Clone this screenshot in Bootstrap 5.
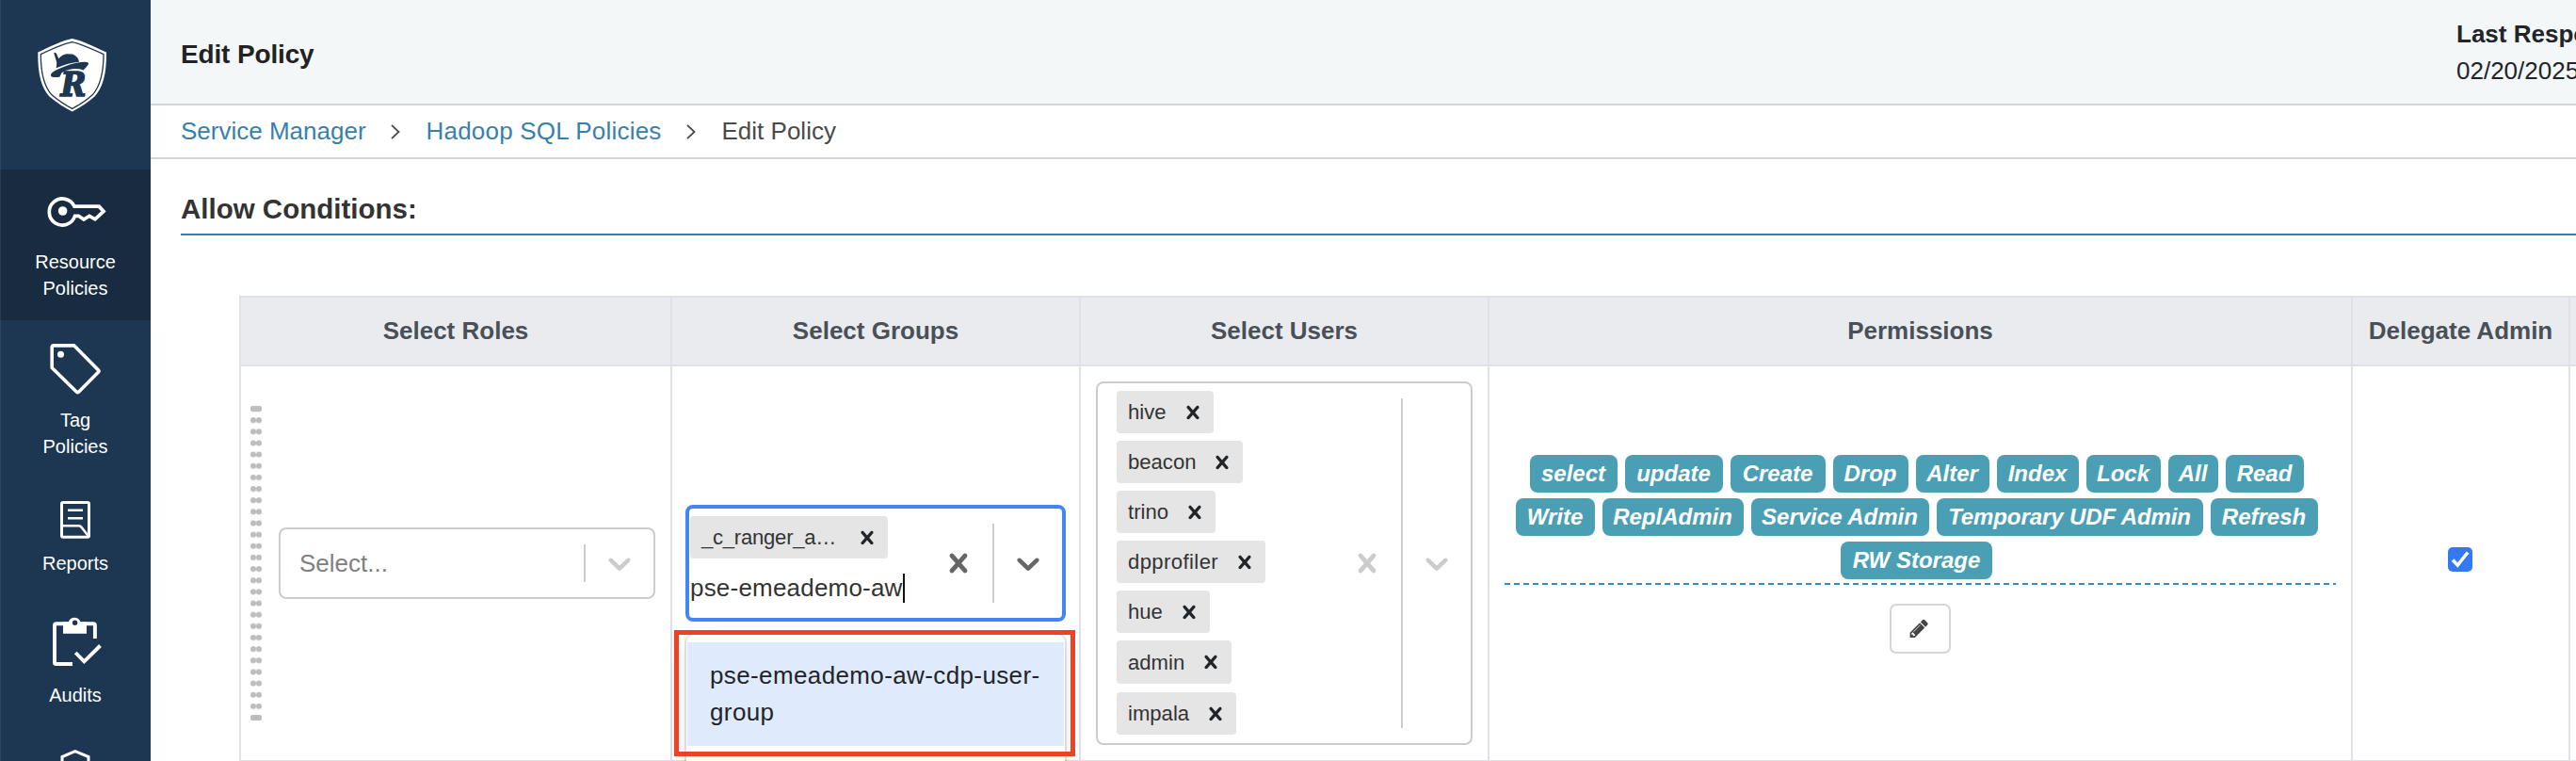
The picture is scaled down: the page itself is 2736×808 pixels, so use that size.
<!DOCTYPE html>
<html lang="en">
<head>
<meta charset="utf-8">
<title>Edit Policy</title>
<link rel="stylesheet" href="https://cdn.jsdelivr.net/npm/bootstrap@5.3.0/dist/css/bootstrap.min.css">
<script src="https://cdn.jsdelivr.net/npm/bootstrap@5.3.0/dist/js/bootstrap.bundle.min.js"></script>
<style>
  html, body { height: 808px; overflow: hidden; }
  body { font-family: "Liberation Sans", Arial, sans-serif; font-size: 26px; line-height: 39px; color: #212529; background: #fff; }
  svg { display: block; flex: none; }
  main { min-width: 0; height: 808px; }
  .side { width: 160px; height: 808px; background: #1d3651; box-shadow: inset 1px 0 #2e4661; color: #fff; font-size: 20px; line-height: 28px; overflow: hidden; }
  .side-item { color: #fff; text-align: center; text-decoration: none; }
  .side-item.current { background: #182b40; height: 160px; box-shadow: inset 1px 0 #2a3c50; }
  .topbar { height: 112px; background: #f4f7f8; border-bottom: 2px solid #d3d6d7; padding: 13px 0 0 32px; }
  .topbar h1 { font-size: 28px; font-weight: 700; margin: 25px 0 0; line-height: 40px; color: #222; letter-spacing: -.15px; }
  .stamp { width: 127px; margin-top: 4px; color: #212529; }
  .crumbs { height: 57px; border-bottom: 2px solid #d3d4d5; padding-left: 32px; color: #4a4a4a; }
  .crumbs a { color: #3880ac; text-decoration: none; }
  .crumbs a + svg + a { letter-spacing: .2px; }
  .crumbs svg { margin: 0 28px 0 26px; }
  .section-title { margin: 0 0 0 32px; padding-top: 33px; height: 81px; font-size: 29.5px; line-height: 40px; font-weight: 700; color: #333; border-bottom: 2px solid #347fab; }
  .policy-grid { width: 2690px; table-layout: fixed; margin: 64px 0 0 94px; border-collapse: collapse; }
  .policy-grid > :not(caption) > * { border-width: 0; }
  .policy-grid > :not(caption) > * > * { border: 2px solid #dee2e6; vertical-align: middle; padding: 0 16px; background: #fff; }
  .policy-grid > thead > tr > th { background: #eaebef; color: #495057; height: 73px; text-align: center; padding: 0; font-weight: 700; }
  .policy-grid > tbody > tr > td { height: 420px; }
  .pick { border: 2px solid #ccc; border-radius: 8px; background: #fff; color: #333; }
  .pick .sep { width: 2px; background: #ccc; margin: 16px 0; align-self: stretch; }
  .pick .ind { padding: 0 16px; color: #ccc; }
  .pick-focus { border: 4px solid #4285f7; height: 124px; }
  .pick-focus .ind { color: #666; }
  .chip { height: 45px; background: #e5e5e5; border-radius: 4px; font-size: 22.1px; padding-left: 12px; line-height: 45px; width: max-content; }
  .chip svg { margin: 0 8px 0 14px; color: #212529; }
  .chip-cut { width: 210px; letter-spacing: -.25px; }
  .chip-wide { letter-spacing: .4px; }
  .drop { left: 1px; right: 1px; top: 138px; height: 180px; background: #fff; border-radius: 8px; padding-top: 8px; box-shadow: 0 0 0 2px rgba(0,0,0,.1), 0 8px 22px rgba(0,0,0,.1); z-index: 2; }
  .drop-opt { background: #dfeafd; height: 110px; padding: 16px 0 0 24px; color: #212529; letter-spacing: .38px; margin: 0 1px; }
  .callout { left: -12px; top: 133px; width: 426px; height: 134px; border: 5px solid #ec4225; z-index: 3; }
  .perm { background: #4b9fb5; border-radius: 8px; font-size: 24px; font-style: italic; height: 40px; line-height: 40px; padding: 0; }
  .perm-list { padding: 0 8px 4px 0; row-gap: 6px; }
  .dash { height: 2px; background: repeating-linear-gradient(90deg, #3c88c6 0 6px, transparent 6px 10px); }
  .edit-btn { width: 65px; height: 53px; border: 2px solid #d5d5d5; border-radius: 7px; background: #fff; color: #444; margin-top: 20px; padding: 0 2px 0 0; }
  .form-check-input.tick { width: 26px; height: 26px; margin: 0 0 9px; border: 0; border-radius: 5px; background-color: #3478f6; background-image: none; }
</style>
</head>
<body class="d-flex">
<svg width="0" height="0" class="position-absolute">
  <defs>
    <path id="cross" d="M14.348 14.849c-0.469 0.469-1.229 0.469-1.697 0l-2.651-3.030-2.651 3.029c-0.469 0.469-1.229 0.469-1.697 0-0.469-0.469-0.469-1.229 0-1.697l2.758-3.15-2.759-3.152c-0.469-0.469-0.469-1.228 0-1.697s1.228-0.469 1.697 0l2.652 3.031 2.651-3.031c0.469-0.469 1.228-0.469 1.697 0s0.469 1.229 0 1.697l-2.758 3.152 2.758 3.15c0.469 0.469 0.469 1.229 0 1.698z"/>
    <path id="down" d="M4.516 7.548c0.436-0.446 1.043-0.481 1.576 0l3.908 3.747 3.908-3.747c0.533-0.481 1.141-0.446 1.574 0 0.436 0.445 0.408 1.197 0 1.615-0.406 0.418-4.695 4.502-4.695 4.502-0.217 0.223-0.502 0.335-0.787 0.335s-0.57-0.112-0.789-0.335c0 0-4.287-4.084-4.695-4.502s-0.436-1.17 0-1.615z"/>
    <pattern id="dots" x="0" y="0" width="12" height="12.148" patternUnits="userSpaceOnUse"><circle cx="3" cy="3" r="3" fill="#bdbdbd"/><circle cx="9" cy="3" r="3" fill="#bdbdbd"/><path d="M4 3h4" stroke="#bdbdbd" stroke-width="1.6"/></pattern>
  </defs>
</svg>

<nav class="side d-flex flex-column flex-shrink-0">
  <a class="side-item" href="#" aria-label="Home">
    <svg width="160" height="180" viewBox="0 0 160 180">
      <path d="M76.700 41C66 43 52 50 40.300 55.500C40 79 44 93 52.500 102.500C60 109 68 114 76.700 118.500C85 114 93.500 109 100.500 102.500C109 93 113.300 79 113 55.500C101 50 87 43 76.700 41Z" fill="#fff"/>
      <path d="M76.700 44.600C67 46.500 54 52.500 43.300 57.600C43.300 79 47 92 54.800 100.600C61.500 106.500 69 111.500 76.700 115.300C84.500 111.500 92 106.500 98.400 100.600C106 92 110 79 110 57.600C99 52.500 86 46.500 76.700 44.600Z" fill="none" stroke="#1d3651" stroke-width="1.300"/>
      <path d="M57.200 56.200Q58.500 54.800 60 57L62.300 62.200Q66 57.500 71 57.200L77 57.600Q83.500 60.500 84 65.800Q73 66.500 59.700 72.300L60.300 66.500Z" fill="#1d3651"/>
      <path d="M54 80.400C53.300 77.500 58 75 64.500 72.200C72 69 80 66.700 86 66.100Q92.500 65.300 94 67Q94.500 68.800 88.500 74.500Q83.500 72.700 77 73.200Q69.500 74.200 65.500 77.200L63.300 81.700Q55 82.500 54 80.400Z" fill="#1d3651"/>
      <text x="64.500" y="101.700" font-family="DejaVu Serif" font-weight="700" font-style="italic" font-size="34.500" fill="#1d3651" stroke="#1d3651" stroke-width="1.600" textLength="27" lengthAdjust="spacingAndGlyphs">R</text>
    </svg>
  </a>
  <a class="side-item current" href="#">
    <svg width="160" height="84" viewBox="0 180 160 84" fill="none" stroke="#fff" stroke-width="3.700">
      <path d="M79 219.200A14 14 0 1 0 79.600 229.300H83.500L89 233L95 229.300L101 232.800L110 224.400L105.200 219.200Z"/>
      <circle cx="66.600" cy="224" r="4.800" fill="#fff" stroke="none"/>
    </svg>
    <div>Resource<br>Policies</div>
  </a>
  <a class="side-item" href="#">
    <svg width="160" height="92" viewBox="0 340 160 92" fill="none" stroke="#fff" stroke-width="3.600" stroke-linejoin="round">
      <path d="M57 366.900H78.800L104.500 393Q105.500 394 104.500 395L83.500 416.200Q82.500 417 81.500 416.200L55.200 390.500V368.700Q55.200 366.900 57 366.900Z"/>
      <circle cx="64.500" cy="376.200" r="3.500" fill="#fff" stroke="none"/>
    </svg>
    <div>Tag<br>Policies</div>
  </a>
  <a class="side-item" href="#">
    <svg width="160" height="96" viewBox="0 488 160 96" fill="none" stroke="#fff" stroke-width="3">
      <rect x="65.500" y="533.500" width="29" height="36.700" rx="1.500"/>
      <path d="M72 541.700h16M72 550.200h16M66 558.200h17.500q2 0 3 1.500L94.500 570" stroke-width="2.600"/>
    </svg>
    <div>Reports</div>
  </a>
  <a class="side-item" href="#">
    <svg width="160" height="112" viewBox="0 612 160 112" fill="none" stroke="#fff" stroke-width="3.900">
      <path d="M77 705H59.500Q58 705 58 703.500V664Q58 662.200 59.800 662.200H99Q100.900 662.200 100.900 664V678"/>
      <path d="M67 660.500H72.800A6.600 6.600 0 0 1 85.400 660.500H92V672.700H67Z" fill="#fff" stroke="none"/>
      <circle cx="79.600" cy="661.300" r="2.700" fill="#1d3651" stroke="none"/>
      <path d="M80.200 693L89.400 702.300L106.500 685.500"/>
    </svg>
    <div>Audits</div>
  </a>
  <a class="side-item" href="#" aria-label="Security Zone">
    <svg width="160" height="56" viewBox="0 752 160 56" fill="none" stroke="#fff" stroke-width="3"><path d="M66 820V803.600L79.800 797.600L94 803.600V820"/></svg>
  </a>
</nav>

<main class="flex-grow-1 overflow-hidden">
  <header class="topbar d-flex justify-content-between align-items-start">
    <h1>Edit Policy</h1>
    <div class="stamp text-nowrap"><b>Last Response Time</b><br>02/20/2025</div>
  </header>
  <nav class="crumbs d-flex align-items-center" aria-label="breadcrumb">
    <a href="#">Service Manager</a>
    <svg width="10" height="16" viewBox="0 0 10 16" fill="none" stroke="#4a4a4a" stroke-width="1.800"><path d="M1 .8L8.500 8L1 15.200"/></svg>
    <a href="#">Hadoop SQL Policies</a>
    <svg width="10" height="16" viewBox="0 0 10 16" fill="none" stroke="#4a4a4a" stroke-width="1.800"><path d="M1 .8L8.500 8L1 15.200"/></svg>
    <span>Edit Policy</span>
  </nav>
  <h2 class="section-title">Allow Conditions:</h2>

  <table class="table table-bordered policy-grid mb-0">
    <colgroup><col style="width:458px"><col style="width:434px"><col style="width:434px"><col style="width:917px"><col style="width:231px"><col></colgroup>
    <thead><tr><th>Select Roles</th><th>Select Groups</th><th>Select Users</th><th>Permissions</th><th>Delegate Admin</th><th></th></tr></thead>
    <tbody><tr>
      <td>
        <div class="d-flex align-items-center" style="margin-left:-6px">
          <svg width="12" height="334" viewBox="0 0 12 334"><rect width="12" height="334" fill="url(#dots)"/><rect width="12" height="6" rx="3" fill="#bdbdbd"/><rect y="328" width="12" height="6" rx="3" fill="#bdbdbd"/></svg>
          <div class="pick d-flex align-items-center" style="width:400px;height:76px;margin-left:18px">
            <span class="flex-grow-1" style="padding-left:20px;color:#808080">Select...</span>
            <span class="sep"></span>
            <span class="ind"><svg width="40" height="40" viewBox="0 0 20 20" fill="currentColor"><use href="#down"/></svg></span>
          </div>
        </div>
      </td>
      <td>
        <div class="position-relative" style="margin:0 -2px">
          <div class="pick pick-focus d-flex align-items-center">
            <div class="flex-grow-1 align-self-stretch" style="padding:8px 0 0 1px">
              <div class="chip chip-cut d-flex align-items-center"><span>_c_ranger_a…</span><svg class="ms-auto" width="28" height="28" viewBox="0 0 20 20" fill="currentColor"><use href="#cross"/></svg></div>
              <div class="d-flex align-items-center" style="margin-top:13px;height:37px;letter-spacing:.2px">pse-emeademo-aw<span style="width:2px;height:31px;background:#111"></span></div>
            </div>
            <span class="ind"><svg width="40" height="40" viewBox="0 0 20 20" fill="currentColor"><use href="#cross"/></svg></span>
            <span class="sep"></span>
            <span class="ind"><svg width="40" height="40" viewBox="0 0 20 20" fill="currentColor"><use href="#down"/></svg></span>
          </div>
          <div class="drop position-absolute"><div class="drop-opt">pse-emeademo-aw-cdp-user-<br>group</div></div>
          <div class="callout position-absolute"></div>
        </div>
      </td>
      <td>
        <div class="pick d-flex align-items-center" style="height:386px">
          <div class="flex-grow-1 align-self-stretch d-flex flex-column gap-2" style="padding:8px 0 0 20px">
            <div class="chip d-flex align-items-center">hive<svg width="28" height="28" viewBox="0 0 20 20" fill="currentColor"><use href="#cross"/></svg></div>
            <div class="chip d-flex align-items-center">beacon<svg width="28" height="28" viewBox="0 0 20 20" fill="currentColor"><use href="#cross"/></svg></div>
            <div class="chip d-flex align-items-center">trino<svg width="28" height="28" viewBox="0 0 20 20" fill="currentColor"><use href="#cross"/></svg></div>
            <div class="chip chip-wide d-flex align-items-center">dpprofiler<svg width="28" height="28" viewBox="0 0 20 20" fill="currentColor"><use href="#cross"/></svg></div>
            <div class="chip d-flex align-items-center">hue<svg width="28" height="28" viewBox="0 0 20 20" fill="currentColor"><use href="#cross"/></svg></div>
            <div class="chip d-flex align-items-center" style="height:46px">admin<svg width="28" height="28" viewBox="0 0 20 20" fill="currentColor"><use href="#cross"/></svg></div>
            <div class="chip d-flex align-items-center" style="margin-top:1px">impala<svg width="28" height="28" viewBox="0 0 20 20" fill="currentColor"><use href="#cross"/></svg></div>
          </div>
          <span class="ind"><svg width="40" height="40" viewBox="0 0 20 20" fill="currentColor"><use href="#cross"/></svg></span>
          <span class="sep"></span>
          <span class="ind"><svg width="40" height="40" viewBox="0 0 20 20" fill="currentColor"><use href="#down"/></svg></span>
        </div>
      </td>
      <td>
        <div class="d-flex flex-column" style="padding-bottom:19px">
          <div class="perm-list d-flex flex-column">
            <div class="d-flex justify-content-center gap-2"><span class="badge perm" style="width:93px">select</span><span class="badge perm" style="width:104px">update</span><span class="badge perm" style="width:101px">Create</span><span class="badge perm" style="width:80px">Drop</span><span class="badge perm" style="width:78px">Alter</span><span class="badge perm" style="width:87px">Index</span><span class="badge perm" style="width:79px">Lock</span><span class="badge perm" style="width:53px">All</span><span class="badge perm" style="width:83px">Read</span></div>
            <div class="d-flex justify-content-center gap-2"><span class="badge perm" style="width:84px">Write</span><span class="badge perm" style="width:150px">ReplAdmin</span><span class="badge perm" style="width:189px">Service Admin</span><span class="badge perm" style="width:283px;letter-spacing:-.1px">Temporary UDF Admin</span><span class="badge perm" style="width:114px">Refresh</span></div>
            <div class="d-flex justify-content-center gap-2"><span class="badge perm" style="width:161px">RW Storage</span></div>
          </div>
          <div class="dash"></div>
          <button class="edit-btn d-flex align-items-center justify-content-center align-self-center" aria-label="Edit"><svg width="22.500" height="22.500" viewBox="0 0 1792 1792" fill="currentColor"><path d="M491 1536l91-91-235-235-91 91v107h128v128h107zm523-928q0-22-22-22-10 0-17 7l-542 542q-7 7-7 17 0 22 22 22 10 0 17-7l542-542q7-7 7-17zm-54-192l416 416-832 832h-416v-416zm683 96q0 53-37 90l-166 166-416-416 166-165q36-38 90-38 53 0 91 38l235 234q37 39 37 91z"/></svg></button>
        </div>
      </td>
      <td>
        <div class="d-flex justify-content-center" style="margin-right:2px"><span class="form-check-input tick d-block"><svg width="26" height="26" viewBox="0 0 26 26" fill="none" stroke="#fff" stroke-width="3.600"><path d="M5 13.500L10.300 19L21 5.500"/></svg></span></div>
      </td>
      <td></td>
    </tr></tbody>
  </table>
</main>
</body>
</html>
